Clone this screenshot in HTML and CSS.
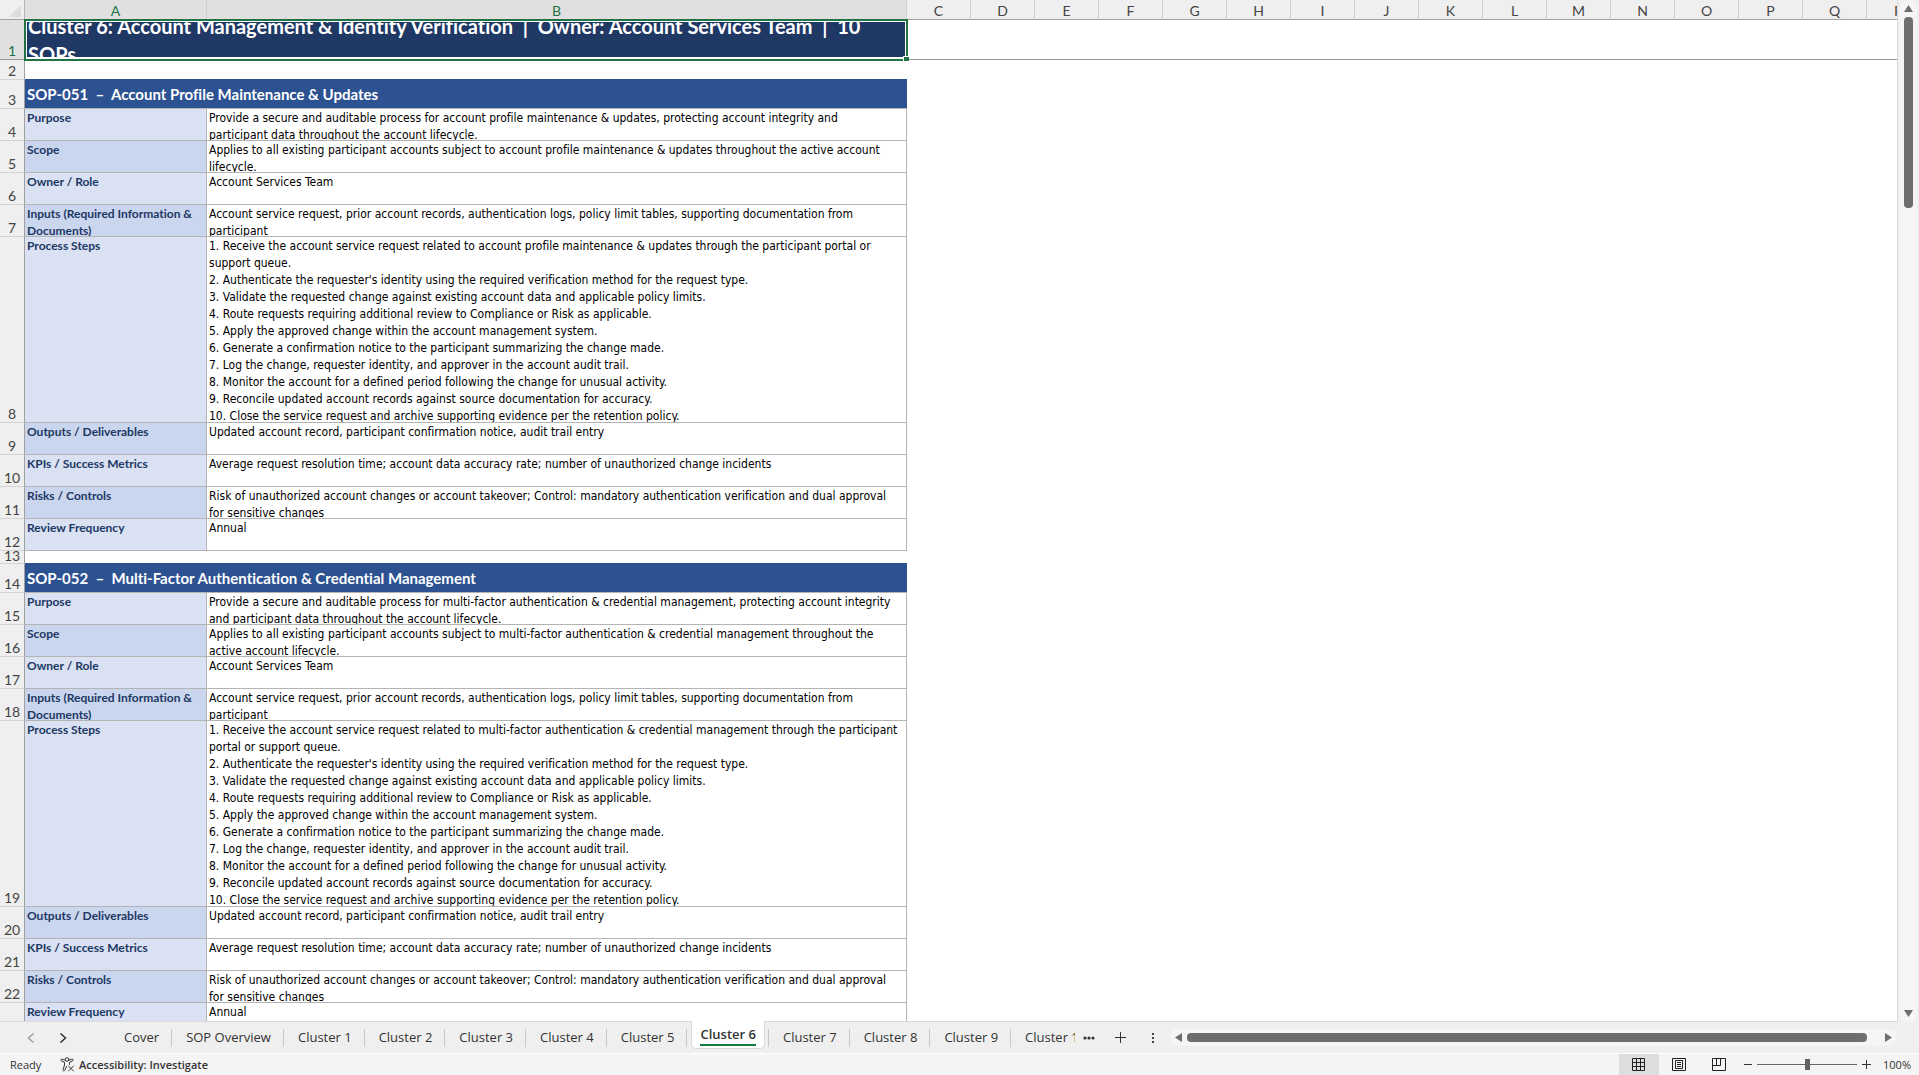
FILE: index.html
```html
<!DOCTYPE html>
<html lang="en">
<head>
    <meta charset="UTF-8">
    <meta name="viewport" content="width=device-width, initial-scale=1.0">
    <title>Cluster 6 - SOP Workbook</title>
    <link rel="stylesheet" href="styles.css">
</head>
<body>

<main class="workspace">
    <div class="pane">
        <table class="sheet">
            <colgroup>
                <col class="col-head">
                <col class="col-a">
                <col class="col-b">
                <col class="col-std" span="16">
            </colgroup>
            <thead>
                <tr>
                    <th class="corner"><svg width="12" height="12" viewBox="0 0 12 12"><path d="M12 0V12H0Z" fill="#dcdcdc"/></svg></th>
                    <th class="active">A</th>
                    <th class="active">B</th>
                    <th>C</th><th>D</th><th>E</th><th>F</th><th>G</th><th>H</th><th>I</th><th>J</th>
                    <th>K</th><th>L</th><th>M</th><th>N</th><th>O</th><th>P</th><th>Q</th><th>R</th>
                </tr>
            </thead>
            <tbody>
                <tr class="row-title">
                    <th class="active">1</th>
                    <td class="title" colspan="2">
                        <div class="cell">Cluster 6: Account Management &amp; Identity Verification&nbsp; |&nbsp; Owner: Account Services Team&nbsp; |&nbsp; 10<br>SOPs</div>
                        <span class="fill-handle"></span>
                    </td>
                    <td class="empty" colspan="16"></td>
                </tr>
                <tr class="row-blank"><th>2</th><td colspan="18"></td></tr>

                <tr class="row-sop"><th>3</th><td class="sop" colspan="2">SOP-051&nbsp; –&nbsp; Account Profile Maintenance &amp; Updates</td></tr>
                <tr class="row"><th>4</th><td class="label"><div class="cell">Purpose</div></td><td class="text"><div class="cell">Provide a secure and auditable process for account profile maintenance &amp; updates, protecting account integrity and<br>participant data throughout the account lifecycle.</div></td></tr>
                <tr class="row alt"><th>5</th><td class="label"><div class="cell">Scope</div></td><td class="text"><div class="cell">Applies to all existing participant accounts subject to account profile maintenance &amp; updates throughout the active account<br>lifecycle.</div></td></tr>
                <tr class="row"><th>6</th><td class="label"><div class="cell">Owner / Role</div></td><td class="text"><div class="cell">Account Services Team</div></td></tr>
                <tr class="row alt"><th>7</th><td class="label"><div class="cell">Inputs (Required Information &amp;<br>Documents)</div></td><td class="text"><div class="cell">Account service request, prior account records, authentication logs, policy limit tables, supporting documentation from<br>participant</div></td></tr>
                <tr class="row steps"><th>8</th><td class="label"><div class="cell">Process Steps</div></td><td class="text"><div class="cell">1. Receive the account service request related to account profile maintenance &amp; updates through the participant portal or<br>support queue.<br>2. Authenticate the requester's identity using the required verification method for the request type.<br>3. Validate the requested change against existing account data and applicable policy limits.<br>4. Route requests requiring additional review to Compliance or Risk as applicable.<br>5. Apply the approved change within the account management system.<br>6. Generate a confirmation notice to the participant summarizing the change made.<br>7. Log the change, requester identity, and approver in the account audit trail.<br>8. Monitor the account for a defined period following the change for unusual activity.<br>9. Reconcile updated account records against source documentation for accuracy.<br>10. Close the service request and archive supporting evidence per the retention policy.</div></td></tr>
                <tr class="row alt"><th>9</th><td class="label"><div class="cell">Outputs / Deliverables</div></td><td class="text"><div class="cell">Updated account record, participant confirmation notice, audit trail entry</div></td></tr>
                <tr class="row"><th>10</th><td class="label"><div class="cell">KPIs / Success Metrics</div></td><td class="text"><div class="cell">Average request resolution time; account data accuracy rate; number of unauthorized change incidents</div></td></tr>
                <tr class="row alt"><th>11</th><td class="label"><div class="cell">Risks / Controls</div></td><td class="text"><div class="cell">Risk of unauthorized account changes or account takeover; Control: mandatory authentication verification and dual approval<br>for sensitive changes</div></td></tr>
                <tr class="row"><th>12</th><td class="label"><div class="cell">Review Frequency</div></td><td class="text"><div class="cell">Annual</div></td></tr>
                <tr class="row-gap"><th><div class="cell">13</div></th><td colspan="18"></td></tr>

                <tr class="row-sop"><th>14</th><td class="sop" colspan="2">SOP-052&nbsp; –&nbsp; Multi-Factor Authentication &amp; Credential Management</td></tr>
                <tr class="row"><th>15</th><td class="label"><div class="cell">Purpose</div></td><td class="text"><div class="cell">Provide a secure and auditable process for multi-factor authentication &amp; credential management, protecting account integrity<br>and participant data throughout the account lifecycle.</div></td></tr>
                <tr class="row alt"><th>16</th><td class="label"><div class="cell">Scope</div></td><td class="text"><div class="cell">Applies to all existing participant accounts subject to multi-factor authentication &amp; credential management throughout the<br>active account lifecycle.</div></td></tr>
                <tr class="row"><th>17</th><td class="label"><div class="cell">Owner / Role</div></td><td class="text"><div class="cell">Account Services Team</div></td></tr>
                <tr class="row alt"><th>18</th><td class="label"><div class="cell">Inputs (Required Information &amp;<br>Documents)</div></td><td class="text"><div class="cell">Account service request, prior account records, authentication logs, policy limit tables, supporting documentation from<br>participant</div></td></tr>
                <tr class="row steps"><th>19</th><td class="label"><div class="cell">Process Steps</div></td><td class="text"><div class="cell">1. Receive the account service request related to multi-factor authentication &amp; credential management through the participant<br>portal or support queue.<br>2. Authenticate the requester's identity using the required verification method for the request type.<br>3. Validate the requested change against existing account data and applicable policy limits.<br>4. Route requests requiring additional review to Compliance or Risk as applicable.<br>5. Apply the approved change within the account management system.<br>6. Generate a confirmation notice to the participant summarizing the change made.<br>7. Log the change, requester identity, and approver in the account audit trail.<br>8. Monitor the account for a defined period following the change for unusual activity.<br>9. Reconcile updated account records against source documentation for accuracy.<br>10. Close the service request and archive supporting evidence per the retention policy.</div></td></tr>
                <tr class="row alt"><th>20</th><td class="label"><div class="cell">Outputs / Deliverables</div></td><td class="text"><div class="cell">Updated account record, participant confirmation notice, audit trail entry</div></td></tr>
                <tr class="row"><th>21</th><td class="label"><div class="cell">KPIs / Success Metrics</div></td><td class="text"><div class="cell">Average request resolution time; account data accuracy rate; number of unauthorized change incidents</div></td></tr>
                <tr class="row alt"><th>22</th><td class="label"><div class="cell">Risks / Controls</div></td><td class="text"><div class="cell">Risk of unauthorized account changes or account takeover; Control: mandatory authentication verification and dual approval<br>for sensitive changes</div></td></tr>
                <tr class="row"><th></th><td class="label"><div class="cell">Review Frequency</div></td><td class="text"><div class="cell">Annual</div></td></tr>
            </tbody>
        </table>
    </div>

    <div class="vscroll">
        <button class="arrow" aria-label="Scroll up"><svg width="9" height="7" viewBox="0 0 9 7"><path d="M4.500 0L9 7H0Z"/></svg></button>
        <div class="vthumb"></div>
        <button class="arrow" aria-label="Scroll down"><svg width="9" height="7" viewBox="0 0 9 7"><path d="M0 0H9L4.500 7Z"/></svg></button>
    </div>
</main>

<nav class="tabbar">
    <div class="tab-nav">
        <button class="dim" aria-label="Previous sheets"><svg width="8" height="10" viewBox="0 0 8 10"><path d="M6.500 0.500L1.500 5L6.500 9.500"/></svg></button>
        <button aria-label="Next sheets"><svg width="8" height="10" viewBox="0 0 8 10"><path d="M1.500 0.500L6.500 5L1.500 9.500"/></svg></button>
    </div>
    <div class="tabs">
        <button class="tab">Cover</button>
        <button class="tab">SOP Overview</button>
        <button class="tab">Cluster 1</button>
        <button class="tab">Cluster 2</button>
        <button class="tab">Cluster 3</button>
        <button class="tab">Cluster 4</button>
        <button class="tab">Cluster 5</button>
        <button class="tab current"><span>Cluster 6</span></button>
        <button class="tab">Cluster 7</button>
        <button class="tab">Cluster 8</button>
        <button class="tab">Cluster 9</button>
        <button class="tab cut">Cluster 10</button>
    </div>
    <div class="tab-tools">
        <button aria-label="More sheets"><svg width="12" height="4" viewBox="0 0 12 4"><g fill="#333"><circle cx="2" cy="2" r="1.600"/><circle cx="6" cy="2" r="1.600"/><circle cx="10" cy="2" r="1.600"/></g></svg></button>
        <button aria-label="New sheet"><svg width="11" height="11" viewBox="0 0 11 11"><path d="M5.500 0V11M0 5.500H11"/></svg></button>
        <button aria-label="Resize tabs"><svg width="2" height="10" viewBox="0 0 2 10"><path d="M0 0H2V2H0ZM0 4H2V6H0ZM0 8H2V10H0Z" fill="#444" stroke="none"/></svg></button>
    </div>
    <div class="hscroll">
        <button class="arrow" aria-label="Scroll left"><svg width="7" height="9" viewBox="0 0 7 9"><path d="M7 0V9L0 4.500Z"/></svg></button>
        <div class="hthumb"></div>
        <button class="arrow" aria-label="Scroll right"><svg width="7" height="9" viewBox="0 0 7 9"><path d="M0 0L7 4.500L0 9Z"/></svg></button>
    </div>
</nav>

<footer class="statusbar">
    <span class="ready">Ready</span>
    <button class="access">
        <svg width="15" height="15" viewBox="0 0 15 15" fill="none" stroke="#333" stroke-linecap="round" stroke-linejoin="round"><circle cx="7" cy="2.500" r="1.800"/><path d="M5.200 3.300L2.200 2.200C0.800 1.800 0.300 3.500 1.500 4L4.500 5.300V8L3 12.800C2.800 14 4.300 14.500 4.800 13.300L6.500 9.500M8.800 3.300L11.800 2.200C13.200 1.800 13.700 3.500 12.500 4L9.500 5.300V7.500"/><path d="M8.500 9L13.500 14M13.500 9L8.500 14"/></svg>
        Accessibility: Investigate
    </button>
    <div class="views">
        <button class="view on" aria-label="Normal"><svg width="14" height="14" viewBox="0 0 14 14"><path d="M0.500 0.500H12.500V12.500H0.500ZM4.500 0.500V12.500M8.500 0.500V12.500M0.500 4.500H12.500M0.500 8.500H12.500"/></svg></button>
        <button class="view" aria-label="Page Layout"><svg width="14" height="14" viewBox="0 0 14 14"><path d="M0.500 0.500H13.500V12.500H0.500ZM3.500 2.500H10.500V10.500H3.500ZM5 4.500H9M5 6.500H9M5 8.500H9"/></svg></button>
        <button class="view" aria-label="Page Break Preview"><svg width="14" height="14" viewBox="0 0 14 14"><path d="M0.500 0.500H13.500V12.500H0.500ZM0.500 7.500H8.500V0.500M4.500 0.500V7.500"/></svg></button>
    </div>
    <div class="zoom">
        <button aria-label="Zoom out"><svg width="8" height="9" viewBox="0 0 8 9"><path d="M0 4.500H8"/></svg></button>
        <input type="range" min="0" max="200" value="100" aria-label="Zoom">
        <button aria-label="Zoom in"><svg width="9" height="9" viewBox="0 0 9 9"><path d="M0 4.500H9M4.500 0V9"/></svg></button>
        <button class="percent">100%</button>
    </div>
</footer>

</body>
</html>
```
FILE: styles.css
```css
* {
    box-sizing: border-box;
    margin: 0;
    padding: 0;
}

body {
    display: flex;
    flex-direction: column;
    height: 100vh;
    overflow: hidden;
    background: #efefef;
    font-family: "Open Sans", "Segoe UI", sans-serif;
    font-size: 13px;
    color: #333;
}

button {
    border: none;
    background: none;
    font: inherit;
    color: inherit;
}

svg {
    display: block;
}

/* Grid area */
.workspace {
    flex: 1;
    display: flex;
    min-height: 0;
}

.pane {
    flex: 1;
    min-width: 0;
    overflow: hidden;
    background: #fff;
    border-right: 1px solid #dadada;
    border-bottom: 1px solid #dadada;
}

.sheet {
    table-layout: fixed;
    width: 100%;
    border-spacing: 0;
    font-variant-ligatures: none;
}

.col-head {
    width: 25px;
}

.col-a {
    width: 182px;
}

.col-b {
    width: 700px;
}

.col-std {
    width: 64px;
}

th {
    font-family: Lato, Calibri, sans-serif;
    font-weight: normal;
    font-size: 14px;
    line-height: 16px;
    color: #444;
    background: #efefef;
}

thead th {
    height: 20px;
    padding-top: 2px;
    border-right: 1px solid #cfcfcf;
    border-bottom: 1px solid #a0a0a0;
}

thead .corner {
    border-right-color: #b5b5b5;
}

.corner svg {
    margin-left: 9px;
}

tbody th {
    vertical-align: bottom;
    border-right: 1px solid #a0a0a0;
    border-bottom: 1px solid #d4d4d4;
}

th.active {
    background: #e0e0e0;
    color: #217346;
}

.cell {
    height: 31px;
    overflow: hidden;
    white-space: nowrap;
}

/* Row 1, frozen */
.row-title th,
.row-title td {
    height: 40px;
    border-bottom: 1px solid #999;
}

.title {
    position: relative;
    background: #203864;
    outline: 2px solid #217346;
    outline-offset: -1px;
    box-shadow: inset 0 0 0 2px #fff;
    color: #fff;
}

.title .cell {
    display: flex;
    align-items: center;
    height: 37px;
    margin: 1px 2px;
    padding-left: 1px;
    font-family: Lato, Calibri, sans-serif;
    font-size: 20px;
    font-weight: bold;
    line-height: 28px;
}

.fill-handle {
    position: absolute;
    right: -2px;
    bottom: -3px;
    width: 6px;
    height: 6px;
    border: 1px solid #fff;
    border-right: none;
    background: #217346;
}

.row-blank {
    height: 20px;
}

.row-sop {
    height: 29px;
}

.sop {
    padding: 0 0 1px 2px;
    background: #2c5292;
    border-bottom: 1px solid #b4b4b4;
    box-shadow: 0 -1px 0 #2c5292;
    color: #fff;
    font-family: Lato, Calibri, sans-serif;
    font-size: 15px;
    font-weight: bold;
}

.label,
.text {
    padding-left: 2px;
    vertical-align: top;
    border-right: 1px solid #b4b4b4;
    border-bottom: 1px solid #b4b4b4;
    line-height: 17px;
}

.label {
    background: #d9e1f2;
    color: #203864;
    font-family: Lato, Calibri, sans-serif;
    font-size: 12px;
    font-weight: bold;
}

.alt .label {
    background: #cad5ee;
}

.text {
    color: #000;
    font-family: "DejaVu Sans Condensed", Calibri, sans-serif;
    font-size: 12px;
}

.text .cell {
    padding-top: 1px;
}

.steps .cell {
    height: 185px;
}

.row-gap {
    height: 13px;
}

.row-gap .cell {
    display: flex;
    align-items: flex-end;
    justify-content: center;
    height: 12px;
    line-height: 14px;
}

/* Scroll bars */
.vscroll {
    display: flex;
    flex-direction: column;
    align-items: center;
    width: 17px;
    margin: 0 2px;
    padding: 5px 0;
    border-radius: 8px;
    background: #f5f5f5;
}

.arrow {
    fill: #6e6e6e;
}

.vthumb {
    width: 9px;
    height: 191px;
    margin: 5px 0 auto;
    border-radius: 4px;
    background: #6e6e6e;
}

/* Sheet tabs */
.tabbar {
    display: flex;
    align-items: center;
    height: 31px;
}

.tab-nav {
    display: flex;
    gap: 24px;
    width: 110px;
    padding-left: 27px;
    fill: none;
    stroke: #333;
    stroke-width: 1.5;
}

.dim {
    stroke: #a0a0a0;
}

.tabs {
    display: flex;
    align-self: stretch;
}

.tab {
    position: relative;
    padding: 0 13px 2px 14px;
    white-space: nowrap;
}

.tab::after {
    content: "";
    position: absolute;
    top: 7px;
    right: 0;
    width: 1px;
    height: 18px;
    background: #c8c8c8;
}

.tab.current {
    height: 28px;
    margin: -1px 4px 0;
    padding: 0 8px;
    border: 1px solid #dadada;
    border-top: none;
    border-radius: 0 0 5px 5px;
    background: #fff;
    font-weight: 600;
}

.tab.current::after {
    right: -5px;
    top: 8px;
}

.current span {
    display: block;
    border-bottom: 2px solid #107c41;
    line-height: 20px;
}

.tab.cut {
    width: 64px;
    padding-right: 0;
    overflow: hidden;
    text-align: left;
}

.tab.cut::after {
    display: none;
}

.tab-tools {
    display: flex;
    align-items: center;
    gap: 20px;
    padding-left: 8px;
    stroke: #333;
}

.tab-tools button:first-child {
    stroke: none;
}

.tab-tools button:last-child {
    margin-left: 6px;
}

.hscroll {
    flex: 1;
    display: flex;
    align-items: center;
    gap: 5px;
    height: 17px;
    margin: 0 22px 0 16px;
    padding: 0 5px;
    border-radius: 8px;
    background: #f5f5f5;
}

.hthumb {
    flex: 1;
    height: 9px;
    margin-right: 13px;
    border-radius: 4px;
    background: #6e6e6e;
}

/* Status bar */
.statusbar {
    display: flex;
    align-items: center;
    height: 22px;
    padding-right: 8px;
    border-top: 1px solid #fff;
    background: #f4f4f4;
    font-size: 11px;
}

.ready {
    width: 60px;
    padding-left: 10px;
}

.access {
    display: flex;
    align-items: center;
    gap: 4px;
    font-weight: 600;
}

.views {
    display: flex;
    align-self: stretch;
    margin-left: auto;
}

.view {
    display: flex;
    align-items: center;
    justify-content: center;
    width: 40px;
    fill: none;
    stroke: #222;
}

.view.on {
    background: #dedede;
}

.zoom {
    display: flex;
    align-items: center;
    gap: 5px;
    margin-left: 5px;
    stroke: #333;
}

.zoom input {
    appearance: none;
    width: 100px;
    height: 11px;
    background: linear-gradient(#666, #666) center / 100% 1px no-repeat;
}

.zoom input::-webkit-slider-thumb {
    appearance: none;
    width: 5px;
    height: 11px;
    background: #606060;
}

.percent {
    margin-left: 7px;
}
```
